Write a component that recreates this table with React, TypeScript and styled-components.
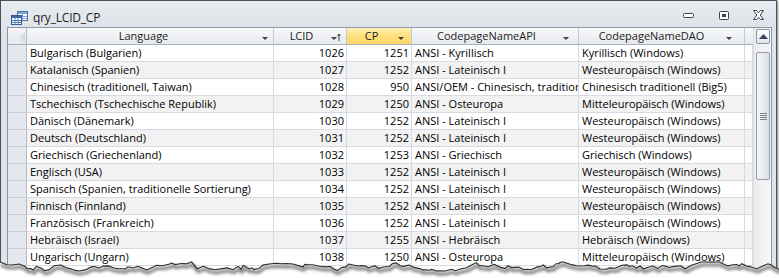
import React from "react";
import styled, { createGlobalStyle } from "styled-components";

const GlobalStyle = createGlobalStyle`
  html, body {
    margin: 0;
    padding: 0;
    background: #fff;
  }
  body {
    font-family: "Open Sans", "Noto Sans", sans-serif;
  }
`;

type Column = {
    key: "language" | "lcid" | "cp" | "api" | "dao";
    label: string;
    width: number;
    numeric?: boolean;
    arrowGap: number;
    sorted?: boolean;
    active?: boolean;
};

const columns: Column[] = [
    { key: "language", label: "Language", width: 247, arrowGap: 5 },
    { key: "lcid", label: "LCID", width: 73, numeric: true, arrowGap: 5, sorted: true },
    { key: "cp", label: "CP", width: 65, numeric: true, arrowGap: 7, active: true },
    { key: "api", label: "CodepageNameAPI", width: 167, arrowGap: 9 },
    { key: "dao", label: "CodepageNameDAO", width: 166, arrowGap: 12 },
];

const gridTemplate = `19px ${columns.map((c) => c.width + "px").join(" ")} 8px`;

type Rec = { language: string; lcid: number; cp: number; api: string; dao: string };

const records: Rec[] = [
    { language: "Bulgarisch (Bulgarien)", lcid: 1026, cp: 1251, api: "ANSI - Kyrillisch", dao: "Kyrillisch (Windows)" },
    { language: "Katalanisch (Spanien)", lcid: 1027, cp: 1252, api: "ANSI - Lateinisch I", dao: "Westeuropäisch (Windows)" },
    {
        language: "Chinesisch (traditionell, Taiwan)",
        lcid: 1028,
        cp: 950,
        api: "ANSI/OEM - Chinesisch, traditionell (Big5)",
        dao: "Chinesisch traditionell (Big5)",
    },
    { language: "Tschechisch (Tschechische Republik)", lcid: 1029, cp: 1250, api: "ANSI - Osteuropa", dao: "Mitteleuropäisch (Windows)" },
    { language: "Dänisch (Dänemark)", lcid: 1030, cp: 1252, api: "ANSI - Lateinisch I", dao: "Westeuropäisch (Windows)" },
    { language: "Deutsch (Deutschland)", lcid: 1031, cp: 1252, api: "ANSI - Lateinisch I", dao: "Westeuropäisch (Windows)" },
    { language: "Griechisch (Griechenland)", lcid: 1032, cp: 1253, api: "ANSI - Griechisch", dao: "Griechisch (Windows)" },
    { language: "Englisch (USA)", lcid: 1033, cp: 1252, api: "ANSI - Lateinisch I", dao: "Westeuropäisch (Windows)" },
    {
        language: "Spanisch (Spanien, traditionelle Sortierung)",
        lcid: 1034,
        cp: 1252,
        api: "ANSI - Lateinisch I",
        dao: "Westeuropäisch (Windows)",
    },
    { language: "Finnisch (Finnland)", lcid: 1035, cp: 1252, api: "ANSI - Lateinisch I", dao: "Westeuropäisch (Windows)" },
    { language: "Französisch (Frankreich)", lcid: 1036, cp: 1252, api: "ANSI - Lateinisch I", dao: "Westeuropäisch (Windows)" },
    { language: "Hebräisch (Israel)", lcid: 1037, cp: 1255, api: "ANSI - Hebräisch", dao: "Hebräisch (Windows)" },
    { language: "Ungarisch (Ungarn)", lcid: 1038, cp: 1250, api: "ANSI - Osteuropa", dao: "Mitteleuropäisch (Windows)" },
];

// jagged "torn paper" line along the bottom of the screenshot
const tornPoints = (() => {
    let seed = 91;
    const rnd = () => {
        seed = (seed * 16807) % 2147483647;
        return seed / 2147483647;
    };
    const pts: [number, number][] = [];
    let y = 26;
    let x = 0;
    while (x < 785) {
        y = y * 0.7 + 28 * 0.3 + (rnd() - 0.5) * 6;
        y = Math.max(24, Math.min(33, y));
        pts.push([x, y]);
        x += 2 + rnd() * 5;
    }
    return pts;
})();

const tornLine = tornPoints.map(([x, y], i) => `${i ? "L" : "M"}${x.toFixed(1)} ${y.toFixed(1)}`).join(" ");
const tornFill = `${tornLine} L785 40 L0 40 Z`;

const App = () => {
    return (
        <Page>
            <GlobalStyle />
            <Window>
                <TitleBar>
                    <QueryIcon />
                    <Title>qry_LCID_CP</Title>
                    <Controls>
                        <CtrlButton>
                            <svg width="11" height="5" viewBox="0 0 11 5">
                                <rect x="0.5" y="0.5" width="10" height="4" rx="1" fill="#fff" stroke="#3b4250" />
                            </svg>
                        </CtrlButton>
                        <CtrlButton>
                            <svg width="10" height="9" viewBox="0 0 10 9">
                                <rect x="0.5" y="0.5" width="9" height="8" rx="1" fill="#fff" stroke="#3b4250" />
                                <rect x="3" y="3" width="4" height="3" fill="#3b4250" />
                            </svg>
                        </CtrlButton>
                        <CtrlButton>
                            <svg width="11" height="10" viewBox="0 0 11 10">
                                <path
                                    d="M0.5 0.5 H3.5 L5.5 2.8 L7.5 0.5 H10.5 L7.2 5 L10.5 9.5 H7.5 L5.5 7.2 L3.5 9.5 H0.5 L3.8 5 Z"
                                    fill="#fff"
                                    stroke="#3b4250"
                                    strokeLinejoin="round"
                                />
                            </svg>
                        </CtrlButton>
                    </Controls>
                </TitleBar>
                <Datasheet>
                    <Sheet>
                        <Row $header>
                            <SelectAll>
                                <svg width="14" height="14" viewBox="0 0 14 14">
                                    <defs>
                                        <linearGradient id="sa" x1="0" y1="1" x2="1" y2="0">
                                            <stop offset="0" stopColor="#f6f7f9" />
                                            <stop offset="1" stopColor="#c9ced6" />
                                        </linearGradient>
                                    </defs>
                                    <path d="M2 13 L13 2 L13 13 Z" fill="url(#sa)" />
                                </svg>
                            </SelectAll>
                            {columns.map((c) => (
                                <HeaderCell key={c.key} $active={c.active}>
                                    <HeaderLabel>{c.label}</HeaderLabel>
                                    <ArrowSlot $gap={c.arrowGap}>
                                        <svg width={c.sorted ? 10 : 6} height="8" viewBox={`0 0 ${c.sorted ? 10 : 6} 8`}>
                                            <path d="M0 4 H6 L3 7 Z" fill="#3f3f3f" />
                                            {c.sorted && (
                                                <path d="M8 8 V1.5 M6.5 3 L8 1 L9.5 3" stroke="#3f3f3f" strokeWidth="1" fill="none" />
                                            )}
                                        </svg>
                                    </ArrowSlot>
                                </HeaderCell>
                            ))}
                            <HeaderFiller />
                        </Row>
                        {records.map((r, i) => (
                            <Row key={r.lcid} $alt={i % 2 === 1}>
                                <Selector />
                                {columns.map((c) => (
                                    <Cell key={c.key} $numeric={c.numeric}>
                                        {r[c.key]}
                                    </Cell>
                                ))}
                                <Cell />
                            </Row>
                        ))}
                    </Sheet>
                    <ScrollBar>
                        <ScrollButton>
                            <svg width="9" height="5" viewBox="0 0 9 5">
                                <path d="M0 5 L4.5 0 L9 5 Z" fill="#34465e" />
                            </svg>
                        </ScrollButton>
                        <Thumb>
                            <Grip />
                            <Grip />
                            <Grip />
                            <Grip />
                        </Thumb>
                    </ScrollBar>
                </Datasheet>
            </Window>
            <TornEdge width="779" height="40" viewBox="0 0 779 40">
                <defs>
                    <filter id="soft" x="-5%" y="-50%" width="110%" height="200%">
                        <feGaussianBlur stdDeviation="1.6" />
                    </filter>
                </defs>
                <path d={tornFill} fill="#fff" />
                <path d={tornLine} transform="translate(1 3)" stroke="#7a7a7a" strokeWidth="3" fill="none" filter="url(#soft)" />
                <path d={tornLine} stroke="#2b2b2b" strokeWidth="1.1" fill="none" />
            </TornEdge>
        </Page>
    );
};

const QueryIcon = () => (
    <svg width="17" height="14" viewBox="0 0 17 14">
        <rect x="6.5" y="0.5" width="10" height="9" fill="#fff" stroke="#4d73ad" />
        <rect x="7" y="1" width="9" height="2" fill="#7ea2d6" />
        <path d="M7 5.5 H16 M7 7.5 H16 M11.5 3 V9.5" stroke="#7ea2d6" strokeWidth="1" />
        <rect x="0.5" y="4.5" width="10" height="9" fill="#fff" stroke="#2f5a96" />
        <rect x="1" y="5" width="9" height="2" fill="#3d67a8" />
        <path d="M1 9.5 H10 M1 11.5 H10 M4 7 V13.5 M7 7 V13.5" stroke="#5b82bd" strokeWidth="1" />
    </svg>
);

const Page = styled.div`
    position: relative;
    width: 779px;
    height: 278px;
    overflow: hidden;
    background: #fff;
`;

const Window = styled.div`
    width: 777px;
    height: 300px;
    box-sizing: border-box;
    border: 1px solid #4b515b;
    background: #dfe4ea;
    box-shadow: 1px 1px 2px rgba(0, 0, 0, 0.5);
    display: flex;
    flex-direction: column;
`;

const TitleBar = styled.div`
    height: 26px;
    flex: none;
    display: flex;
    align-items: center;
    box-sizing: border-box;
    padding: 7px 0 0 10px;
    background: linear-gradient(#e8ecf1, #dfe4ea);
`;

const Title = styled.span`
    flex: 1;
    margin-left: 5px;
    font-size: 12px;
    color: #1e1e1e;
    letter-spacing: -0.2px;
`;

const Controls = styled.div`
    display: flex;
    align-items: center;
    margin-top: -5px;
`;

const CtrlButton = styled.div`
    width: 35px;
    height: 16px;
    display: flex;
    align-items: center;
    justify-content: center;
`;

const Datasheet = styled.div`
    flex: 1;
    display: flex;
    margin: 0 4px 0 6px;
    border: 1px solid #8d97a5;
    background: #fff;
`;

const Sheet = styled.div`
    width: 745px;
    display: flex;
    flex-direction: column;
`;

const Row = styled.div<{ $header?: boolean; $alt?: boolean }>`
    display: grid;
    grid-template-columns: ${gridTemplate};
    height: 17px;
    background: ${(p) => (p.$alt ? "#f2f2f2" : "#fff")};
    font-size: 11px;
    line-height: 16px;
    color: #000;
`;

const SelectAll = styled.div`
    box-sizing: border-box;
    border-right: 1px solid #b3bbc6;
    border-bottom: 1px solid #a7b0bd;
    background: linear-gradient(#f4f5f7, #e3e6eb);
    display: flex;
    align-items: flex-end;
    justify-content: flex-end;
`;

const HeaderCell = styled.div<{ $active?: boolean }>`
    box-sizing: border-box;
    display: flex;
    align-items: center;
    min-width: 0;
    border-right: 1px solid #c4cad3;
    border-bottom: 1px solid #a7b0bd;
    background: ${(p) =>
        p.$active ? "linear-gradient(#fff3b8, #fee07f 45%, #fdd663)" : "linear-gradient(#f8f9fa, #e6e9ee)"};
    color: #1b1b1b;
`;

const HeaderLabel = styled.span`
    flex: 1;
    min-width: 0;
    text-align: center;
    white-space: nowrap;
    overflow: hidden;
`;

const ArrowSlot = styled.span<{ $gap: number }>`
    display: flex;
    align-items: center;
    margin: 1px ${(p) => p.$gap}px 0 2px;
`;

const HeaderFiller = styled.div`
    box-sizing: border-box;
    border-bottom: 1px solid #a7b0bd;
    background: linear-gradient(#f8f9fa, #e6e9ee);
`;

const Selector = styled.div`
    box-sizing: border-box;
    border-right: 1px solid #b3bbc6;
    border-bottom: 1px solid #c9ced6;
    background: #e4e7ec;
`;

const Cell = styled.div<{ $numeric?: boolean }>`
    box-sizing: border-box;
    min-width: 0;
    padding: 0 ${(p) => (p.$numeric ? "2px" : "3px")};
    border-right: 1px solid #d5dbe4;
    border-bottom: 1px solid #d5dbe4;
    text-align: ${(p) => (p.$numeric ? "right" : "left")};
    white-space: nowrap;
    overflow: hidden;
`;

const ScrollBar = styled.div`
    flex: 1;
    display: flex;
    flex-direction: column;
    align-items: stretch;
    padding: 1px 1px 0 2px;
    border-left: 1px solid #dcdfe3;
    background: linear-gradient(90deg, #ebebeb, #f7f7f7);
`;

const ScrollButton = styled.div`
    height: 15px;
    box-sizing: border-box;
    border: 1px solid #8c96a3;
    border-radius: 2px;
    background: linear-gradient(#fdfdfd, #e2e6ea);
    display: flex;
    align-items: center;
    justify-content: center;
`;

const Thumb = styled.div`
    margin-top: 8px;
    height: 128px;
    box-sizing: border-box;
    border: 1px solid #949ca7;
    border-radius: 2px;
    background: linear-gradient(90deg, #f5f6f7, #dcdfe3);
    display: flex;
    flex-direction: column;
    align-items: center;
    justify-content: center;
    gap: 1px;
`;

const Grip = styled.span`
    width: 7px;
    height: 1px;
    background: #7d838c;
`;

const TornEdge = styled.svg`
    position: absolute;
    left: 0;
    bottom: 0;
`;

export default App;
